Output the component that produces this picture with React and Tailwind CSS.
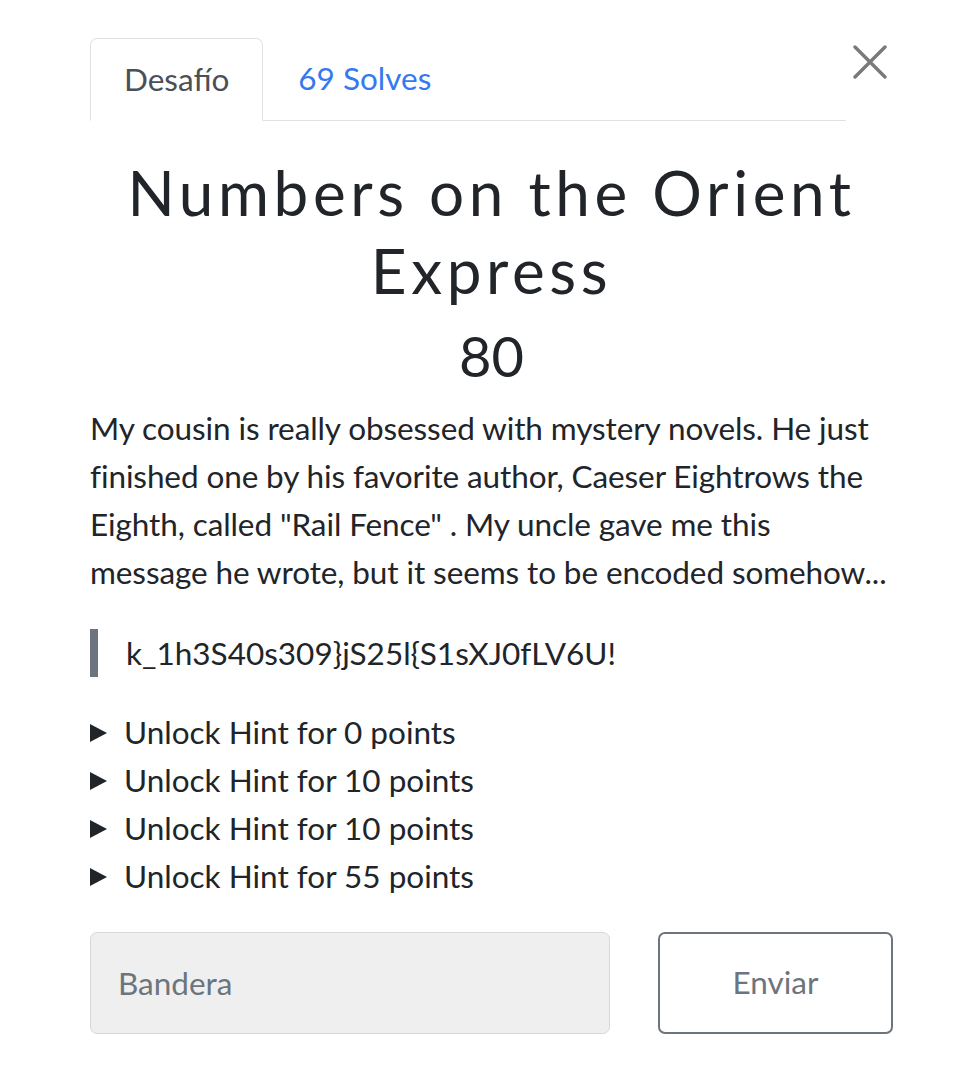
import React from 'react';

const hints = [0, 10, 10, 55];

const App = () => {
  return (
    <div className="min-h-screen bg-white font-['Lato',sans-serif] text-[#212529]">
      <div className="ml-[90px] w-[803px] pt-[38px]">
        {/* tabs + close */}
        <div className="flex items-start">
          <ul className="flex w-[756px] border-b border-[#dee2e6]">
            <li className="-mb-px flex h-[83px] items-center rounded-t-[7px] border border-[#dee2e6] border-b-white bg-white px-[33px] text-[31.5px] text-[#495057]">
              Desafío
            </li>
            <li className="flex h-[82px] items-center px-[35px] text-[31.5px] text-[#3579f0]">
              69 Solves
            </li>
          </ul>
          <button className="ml-[7px] mt-[7px] p-0">
            <svg width="34" height="34" viewBox="0 0 34 34" fill="none" stroke="#7a7a7a" strokeWidth="3.4" strokeLinecap="round">
              <path d="M2 2 L32 32 M32 2 L2 32" />
            </svg>
          </button>
        </div>

        {/* title */}
        <h2 className="mt-[32px] text-center text-[62px] leading-[78px] tracking-[4.6px]">
          Numbers on the Orient Express
        </h2>
        <h3 className="mt-[13px] text-center text-[56px] leading-[67px]">80</h3>

        {/* description */}
        <p className="mt-[15px] text-[31.5px] leading-[48px] tracking-[-0.1px]">
          My cousin is really obsessed with mystery novels. He just finished one by his favorite author, Caeser Eightrows the Eighth, called "Rail Fence" . My uncle gave me this message he wrote, but it seems to be encoded somehow...
        </p>

        <blockquote className="mt-[33px] border-l-[8px] border-[#6c757d] pl-[28px] text-[31.5px] leading-[48px]">
          k_1h3S40s309}jS25l{'{'}S1sXJ0fLV6U!
        </blockquote>

        {/* hints */}
        <div className="mt-[31px]">
          {hints.map((p, i) => (
            <div key={i} className="flex items-center text-[31.5px] leading-[48px]">
              <svg width="17" height="18" viewBox="0 0 17 18" className="mr-[17px] mt-[2px]">
                <path d="M0 0 L17 9 L0 18 Z" fill="#212529" />
              </svg>
              Unlock Hint for {p} points
            </div>
          ))}
        </div>

        {/* submit */}
        <div className="mt-[32px] flex gap-[48px]">
          <input
            placeholder="Bandera"
            className="h-[102px] w-[520px] rounded-[7px] border border-[#d6d9dc] bg-[#efefef] px-[27px] text-[31.5px] text-[#495057] placeholder:text-[#6c757d] outline-none"
          />
          <button className="h-[102px] flex-1 rounded-[7px] border-2 border-[#6c757d] bg-white text-[31.5px] text-[#6c757d]">
            Enviar
          </button>
        </div>
      </div>
    </div>
  );
};

export default App;
